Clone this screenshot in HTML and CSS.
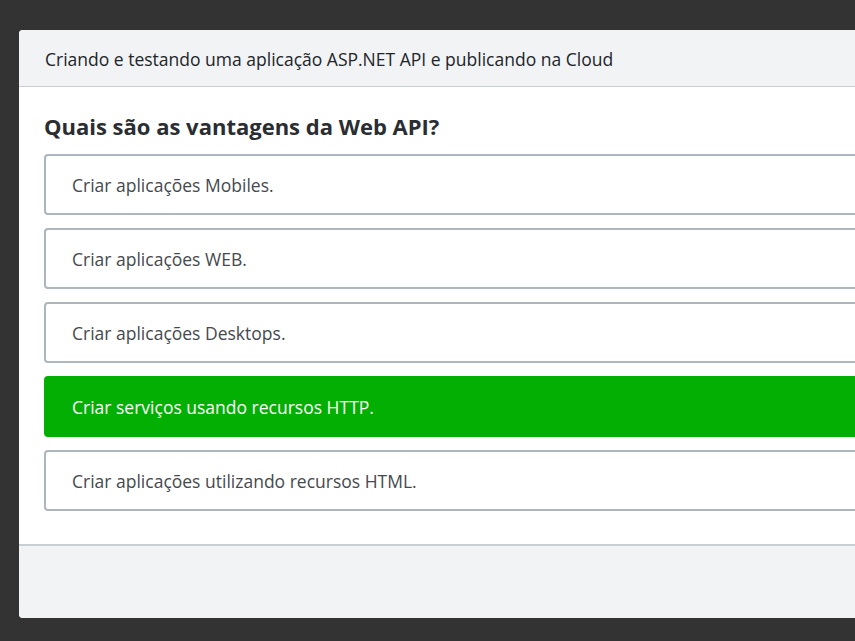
FILE: index.html
```html
<!DOCTYPE html>
<html lang="pt-BR">
<head>
<meta charset="utf-8">
<title>Quiz</title>
<link rel="stylesheet" href="styles.css">
</head>
<body>
<div class="page">
  <div class="modal">
    <div class="modal-header">Criando e testando uma aplicação ASP.NET API e publicando na Cloud</div>
    <div class="modal-body">
      <h2 class="question">Quais são as vantagens da Web API?</h2>
      <div class="options">
        <div class="option">Criar aplicações Mobiles.</div>
        <div class="option">Criar aplicações WEB.</div>
        <div class="option">Criar aplicações Desktops.</div>
        <div class="option option-correct">Criar serviços usando recursos HTTP.</div>
        <div class="option">Criar aplicações utilizando recursos HTML.</div>
      </div>
    </div>
    <div class="modal-footer"></div>
  </div>
</div>
</body>
</html>
```
FILE: styles.css
```css
html, body {
  margin: 0;
  padding: 0;
  background: #333333;
  overflow: hidden;
  height: 100%;
}
body {
  font-family: "Open Sans", "Noto Sans", sans-serif;
}
.page {
  padding: 30px 0 0 19px;
  width: 1000px;
}
.modal {
  width: 960px;
  background: #ffffff;
  border-radius: 4px;
  overflow: hidden;
}
.modal-header {
  background: #f2f3f5;
  border-bottom: 1px solid #c9ced4;
  padding: 17px 26px 15px 26px;
  font-size: 17.5px;
  line-height: 24px;
  color: #212529;
}
.modal-body {
  padding: 25px 25px 33px 25px;
}
.question {
  margin: 0 0 14px 0;
  font-size: 22px;
  line-height: 28px;
  font-weight: 700;
  color: #2a2d31;
}
.options {
  display: flex;
  flex-direction: column;
  gap: 13px;
}
.option {
  border: 2px solid #adb5bd;
  border-radius: 4px;
  padding: 17px 26px 16px 26px;
  font-size: 17.5px;
  line-height: 24px;
  color: #45494e;
  background: #ffffff;
}
.option-correct {
  background: #02af02;
  border-color: #02af02;
  color: #ffffff;
  font-weight: 500;
}
.modal-footer {
  border-top: 2px solid #c9ced4;
  background: #f2f3f5;
  height: 72px;
}
```
